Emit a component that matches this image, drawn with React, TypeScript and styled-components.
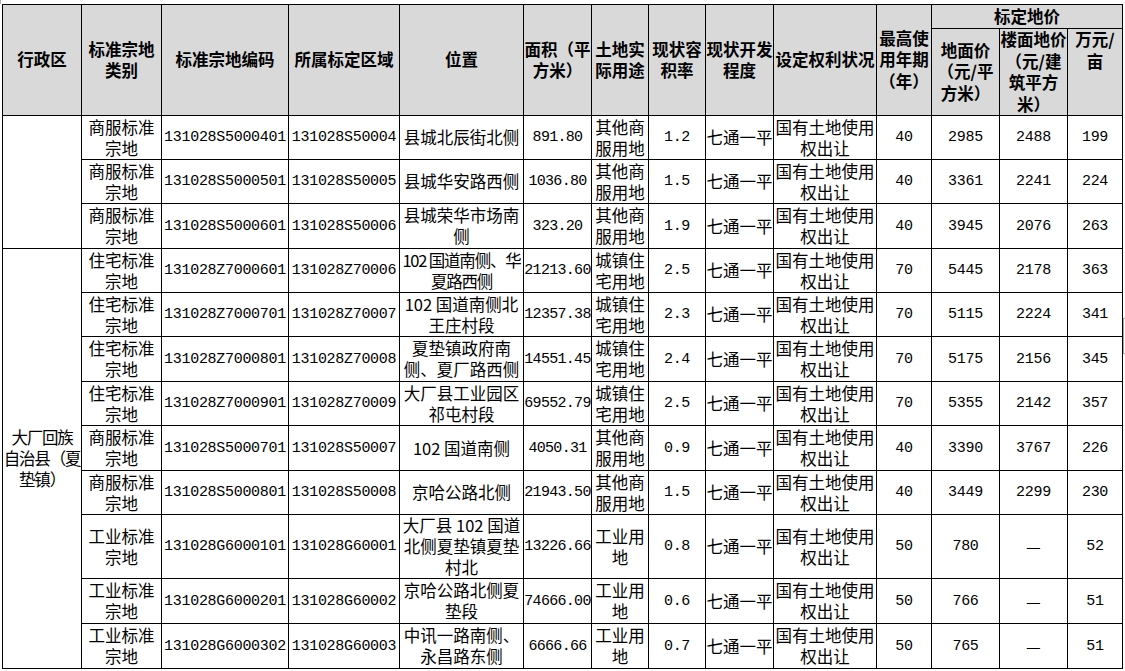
import React from "react";
import styled, { createGlobalStyle } from "styled-components";

const GlobalStyle = createGlobalStyle`
  html, body { margin: 0; padding: 0; background: #ffffff; }
  body { font-family: "Noto Sans CJK SC", "Noto Sans", sans-serif; color: #000; }
`;

const Page = styled.div`
  position: relative;
  width: 1125px;
  height: 671px;
  padding: 4px 0 0 2px;
  box-sizing: border-box;
  overflow: hidden;
`;

const CornerTick = styled.div`
  position: absolute;
  left: 0;
  top: 0;
  width: 1px;
  height: 4px;
  background: #b0b0b0;
`;

const SideBracket = styled.div`
  position: absolute;
  left: 1123px;
  top: 318px;
  width: 3px;
  height: 34px;
  border: 1px solid #a8a8a8;
  border-right: none;
`;

const Table = styled.table`
  border-collapse: collapse;
  table-layout: fixed;
  width: 1121px;
`;

const HeadRow = styled.tr<{ $h: number }>`
  height: ${(p) => p.$h}px;
`;

const Th = styled.th<{ $top?: boolean }>`
  background: #d9d9d9;
  border: 1px solid #000;
  padding: 0;
  font-family: "Noto Sans CJK SC", sans-serif;
  font-weight: 700;
  font-size: 16.5px;
  line-height: 21.5px;
  text-align: center;
  vertical-align: ${(p) => (p.$top ? "top" : "middle")};
  white-space: pre;
  overflow: visible;
`;

const BodyRow = styled.tr<{ $h: number }>`
  height: ${(p) => p.$h}px;
`;

type Spacing = "normal" | "tight" | "narrow";

const Td = styled.td<{ $num?: boolean; $sp?: Spacing }>`
  border: 1px solid #000;
  padding: 0;
  font-family: ${(p) =>
    p.$num ? '"Liberation Mono", monospace' : '"Noto Sans CJK SC", sans-serif'};
  font-weight: 400;
  font-size: ${(p) => (p.$num ? "15px" : "16.5px")};
  letter-spacing: ${(p) =>
    p.$sp === "narrow"
      ? "-0.7px"
      : p.$sp === "tight"
      ? "-1.2px"
      : p.$num
      ? "-0.3px"
      : "0"};
  line-height: 21px;
  text-align: center;
  vertical-align: middle;
  white-space: pre;
  overflow: visible;
`;

const colWidths = [79, 80, 127, 111, 124, 68, 57, 57, 68, 103, 55, 68, 68, 55];

type Row = {
  h: number;
  type: string;
  code: string;
  zone: string;
  loc: string;
  locTight?: boolean;
  area: string;
  use: string;
  ratio: string;
  yrs: string;
  land: string;
  floor: string;
  wan: string;
};

const rows: Row[] = [
  { h: 44, type: "商服标准\n宗地", code: "131028S5000401", zone: "131028S50004", loc: "县城北辰街北侧", area: "891.80", use: "其他商\n服用地", ratio: "1.2", yrs: "40", land: "2985", floor: "2488", wan: "199" },
  { h: 44, type: "商服标准\n宗地", code: "131028S5000501", zone: "131028S50005", loc: "县城华安路西侧", area: "1036.80", use: "其他商\n服用地", ratio: "1.5", yrs: "40", land: "3361", floor: "2241", wan: "224" },
  { h: 45, type: "商服标准\n宗地", code: "131028S5000601", zone: "131028S50006", loc: "县城荣华市场南\n侧", area: "323.20", use: "其他商\n服用地", ratio: "1.9", yrs: "40", land: "3945", floor: "2076", wan: "263" },
  { h: 44, type: "住宅标准\n宗地", code: "131028Z7000601", zone: "131028Z70006", loc: "102 国道南侧、华\n夏路西侧", locTight: true, area: "21213.60", use: "城镇住\n宅用地", ratio: "2.5", yrs: "70", land: "5445", floor: "2178", wan: "363" },
  { h: 44, type: "住宅标准\n宗地", code: "131028Z7000701", zone: "131028Z70007", loc: "102 国道南侧北\n王庄村段", area: "12357.38", use: "城镇住\n宅用地", ratio: "2.3", yrs: "70", land: "5115", floor: "2224", wan: "341" },
  { h: 45, type: "住宅标准\n宗地", code: "131028Z7000801", zone: "131028Z70008", loc: "夏垫镇政府南\n侧、夏厂路西侧", area: "14551.45", use: "城镇住\n宅用地", ratio: "2.4", yrs: "70", land: "5175", floor: "2156", wan: "345" },
  { h: 44, type: "住宅标准\n宗地", code: "131028Z7000901", zone: "131028Z70009", loc: "大厂县工业园区\n祁屯村段", area: "69552.79", use: "城镇住\n宅用地", ratio: "2.5", yrs: "70", land: "5355", floor: "2142", wan: "357" },
  { h: 45, type: "商服标准\n宗地", code: "131028S5000701", zone: "131028S50007", loc: "102 国道南侧", area: "4050.31", use: "其他商\n服用地", ratio: "0.9", yrs: "40", land: "3390", floor: "3767", wan: "226" },
  { h: 44, type: "商服标准\n宗地", code: "131028S5000801", zone: "131028S50008", loc: "京哈公路北侧", area: "21943.50", use: "其他商\n服用地", ratio: "1.5", yrs: "40", land: "3449", floor: "2299", wan: "230" },
  { h: 64, type: "工业标准\n宗地", code: "131028G6000101", zone: "131028G60001", loc: "大厂县 102 国道\n北侧夏垫镇夏垫\n村北", area: "13226.66", use: "工业用\n地", ratio: "0.8", yrs: "50", land: "780", floor: "—", wan: "52" },
  { h: 45, type: "工业标准\n宗地", code: "131028G6000201", zone: "131028G60002", loc: "京哈公路北侧夏\n垫段", area: "74666.00", use: "工业用\n地", ratio: "0.6", yrs: "50", land: "766", floor: "—", wan: "51" },
  { h: 45, type: "工业标准\n宗地", code: "131028G6000302", zone: "131028G60003", loc: "中讯一路南侧、\n永昌路东侧", area: "6666.66", use: "工业用\n地", ratio: "0.7", yrs: "50", land: "765", floor: "—", wan: "51" },
];

function District({ index }: { index: number }) {
  if (index === 0) return <Td rowSpan={3} />;
  if (index === 3)
    return (
      <Td rowSpan={9} $sp="tight">
        {"大厂回族\n自治县（夏\n垫镇）"}
      </Td>
    );
  return null;
}

export default function App() {
  return (
    <>
      <GlobalStyle />
      <Page>
        <CornerTick />
        <Table>
          <colgroup>
            {colWidths.map((w, i) => (
              <col key={i} style={{ width: w }} />
            ))}
          </colgroup>
          <thead>
            <HeadRow $h={24}>
              <Th rowSpan={2}>行政区</Th>
              <Th rowSpan={2}>{"标准宗地\n类别"}</Th>
              <Th rowSpan={2}>标准宗地编码</Th>
              <Th rowSpan={2}>所属标定区域</Th>
              <Th rowSpan={2}>位置</Th>
              <Th rowSpan={2}>{"面积（平\n方米）"}</Th>
              <Th rowSpan={2}>{"土地实\n际用途"}</Th>
              <Th rowSpan={2}>{"现状容\n积率"}</Th>
              <Th rowSpan={2}>{"现状开发\n程度"}</Th>
              <Th rowSpan={2}>设定权利状况</Th>
              <Th rowSpan={2}>{"最高使\n用年期\n（年）"}</Th>
              <Th colSpan={3}>标定地价</Th>
            </HeadRow>
            <HeadRow $h={87}>
              <Th>{"地面价\n（元/平\n方米）"}</Th>
              <Th>{"楼面地价\n（元/建\n筑平方\n米）"}</Th>
              <Th $top>{"万元/\n亩"}</Th>
            </HeadRow>
          </thead>
          <tbody>
            {rows.map((r, i) => (
              <BodyRow key={r.code} $h={r.h}>
                <District index={i} />
                <Td>{r.type}</Td>
                <Td $num>{r.code}</Td>
                <Td $num>{r.zone}</Td>
                <Td $sp={r.locTight ? "tight" : "normal"}>{r.loc}</Td>
                <Td $num $sp="narrow">{r.area}</Td>
                <Td>{r.use}</Td>
                <Td $num>{r.ratio}</Td>
                <Td>七通一平</Td>
                <Td>{"国有土地使用\n权出让"}</Td>
                <Td $num>{r.yrs}</Td>
                <Td $num>{r.land}</Td>
                <Td $num={r.floor !== "—"}>{r.floor}</Td>
                <Td $num>{r.wan}</Td>
              </BodyRow>
            ))}
          </tbody>
        </Table>
        <SideBracket />
      </Page>
    </>
  );
}
